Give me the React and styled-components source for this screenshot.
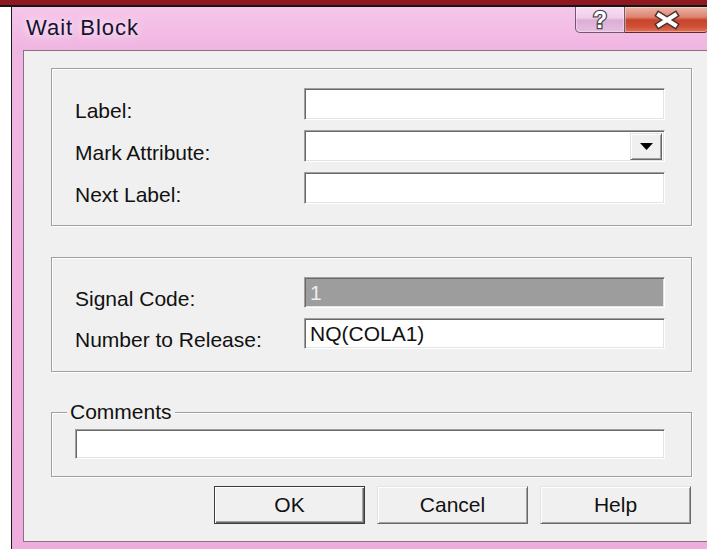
import React from "react";
import styled, { createGlobalStyle } from "styled-components";

const GlobalStyle = createGlobalStyle`
  *, *::before, *::after { box-sizing: border-box; }
  html, body {
    margin: 0;
    padding: 0;
    background: #fff;
  }
  body {
    width: 707px;
    height: 549px;
    overflow: hidden;
    font-family: "Liberation Sans", Arial, sans-serif;
  }
`;

const Screen = styled.div`
  width: 707px;
  height: 549px;
  overflow: hidden;
  display: flex;
  flex-direction: column;
`;

const TaskStrip = styled.div`
  flex: none;
  height: 7px;
  background: #8f1820;
  border-bottom: 2px solid #151515;
`;

const Desk = styled.div`
  flex: 1;
  display: flex;
  padding-left: 11px;
  min-height: 0;
`;

const Window = styled.div`
  flex: none;
  width: 721px;
  border-left: 1px solid #1b1b1b;
  border-right: 1px solid #1b1b1b;
  background: linear-gradient(180deg, #f5c6ea 0px, #f0b6e2 40px, #eeaddd 100%);
  padding: 0 11px 10px;
  display: flex;
  flex-direction: column;
`;

const TitleBar = styled.div`
  flex: none;
  height: 43px;
  display: flex;
  align-items: flex-start;
  justify-content: space-between;
`;

const Title = styled.div`
  padding: 10px 0 0 3px;
  font-size: 22px;
  line-height: 22px;
  letter-spacing: 1px;
  color: #15142e;
  text-shadow: 0 0 6px #fde9f8, 0 0 12px #fbe0f5;
`;

const Controls = styled.div`
  display: flex;
  margin-right: 11px;
`;

const CaptionButton = styled.div`
  height: 26px;
  width: ${p => p.$w}px;
  display: flex;
  align-items: center;
  justify-content: center;
  border: 1px solid ${p => (p.$close ? "#5e2a26" : "#6e5a6a")};
  border-top: none;
  border-left: ${p => (p.$close ? "none" : undefined)};
  border-radius: ${p => (p.$close ? "0 0 5px 0" : "0 0 0 5px")};
  background: ${p =>
    p.$close
      ? "linear-gradient(180deg, #ebb4a8 0%, #de8470 40%, #c8442c 52%, #cf4f37 78%, #e07458 100%)"
      : "linear-gradient(180deg, #f9e0f4 0%, #f0cbe9 45%, #dcaed4 52%, #e6bfe0 100%)"};
  box-shadow: inset 0 0 0 1px rgba(255, 255, 255, 0.35);

  svg {
    overflow: visible;
  }
`;

const Client = styled.div`
  flex: none;
  background: #f0f0f0;
  border: 1px solid #8a7086;
  padding: 17px 27px 17px;
  display: flex;
  flex-direction: column;
`;

const Group = styled.div`
  flex: none;
  position: relative;
  margin-top: ${p => p.$top || 0}px;
  border: 1px solid #a0a0a0;
  box-shadow: inset 1px 1px 0 #fff, 1px 1px 0 #fff;
  padding: ${p => p.$pad};
  display: grid;
  grid-template-columns: ${p => p.$cols || "229px 361px"};
  row-gap: 10px;
`;

const Caption = styled.span`
  position: absolute;
  top: -12px;
  left: 15px;
  padding: 0 3px;
  background: #f0f0f0;
  font-size: 21px;
  line-height: 22px;
  color: #111;
`;

const Label = styled.div`
  align-self: end;
  font-size: 21px;
  line-height: 19px;
  color: #111;
  white-space: nowrap;
`;

const TextBox = styled.input`
  display: block;
  width: 100%;
  height: ${p => p.$h}px;
  margin: 0;
  padding: 0 0 0 5px;
  font: 21px "Liberation Sans", Arial, sans-serif;
  color: ${p => (p.disabled ? "#ececec" : "#111")};
  background: ${p => (p.disabled ? "#9d9d9d" : "#fff")};
  border: 1px solid;
  border-color: #a0a0a0 #fff #fff #a0a0a0;
  box-shadow: inset 1px 1px 0 #696969, inset -1px -1px 0 #e3e3e3;
  outline: none;
`;

const Combo = styled.div`
  height: 32px;
  display: flex;
  justify-content: flex-end;
  align-items: center;
  padding-right: 2px;
  background: #fff;
  border: 1px solid;
  border-color: #a0a0a0 #fff #fff #a0a0a0;
  box-shadow: inset 1px 1px 0 #696969, inset -1px -1px 0 #e3e3e3;
`;

const DropButton = styled.div`
  width: 32px;
  height: 27px;
  margin-top: 1px;
  display: flex;
  align-items: center;
  justify-content: center;
  background: #f0f0f0;
  border: 1px solid;
  border-color: #e3e3e3 #696969 #696969 #e3e3e3;
  box-shadow: inset 1px 1px 0 #fff, inset -1px -1px 0 #a0a0a0;
`;

const ButtonRow = styled.div`
  flex: none;
  margin-top: 9px;
  padding-right: 1px;
  display: flex;
  justify-content: flex-end;
  gap: 12px;
`;

const Button = styled.button`
  flex: none;
  width: 151px;
  height: 38px;
  margin: 0;
  padding: 0;
  font: 21px "Liberation Sans", Arial, sans-serif;
  color: #111;
  background: #f0f0f0;
  border: 1px solid;
  border-color: ${p =>
    p.$default ? "#3c3c3c" : "#e3e3e3 #696969 #696969 #e3e3e3"};
  box-shadow: ${p =>
    p.$default
      ? "inset 1px 1px 0 #fff, inset -1px -1px 0 #696969, inset -2px -2px 0 #a0a0a0"
      : "inset 1px 1px 0 #fff, inset -1px -1px 0 #a0a0a0"};
`;

const HelpGlyph = () => (
  <svg width="22" height="24" viewBox="0 0 22 24">
    <text
      x="11"
      y="20"
      textAnchor="middle"
      fontFamily="Liberation Sans, Arial, sans-serif"
      fontWeight="bold"
      fontSize="23"
      fill="#fff"
      stroke="#4c4650"
      strokeWidth="2.6"
      paintOrder="stroke"
    >
      ?
    </text>
  </svg>
);

const CloseGlyph = () => (
  <svg width="28" height="18" viewBox="0 0 28 18">
    <path d="M6 4 L22 14 M22 4 L6 14" stroke="#4a3230" strokeWidth="7" strokeLinecap="square" />
    <path d="M6 4 L22 14 M22 4 L6 14" stroke="#fff" strokeWidth="4" strokeLinecap="square" />
  </svg>
);

const ArrowDown = () => (
  <svg width="13" height="7" viewBox="0 0 13 7">
    <polygon points="0,0 13,0 6.5,7" fill="#000" />
  </svg>
);

const App = () => {
  return (
    <>
      <GlobalStyle />
      <Screen>
        <TaskStrip />
        <Desk>
          <Window>
            <TitleBar>
              <Title>Wait Block</Title>
              <Controls>
                <CaptionButton $w={50}>
                  <HelpGlyph />
                </CaptionButton>
                <CaptionButton $w={84} $close>
                  <CloseGlyph />
                </CaptionButton>
              </Controls>
            </TitleBar>
            <Client>
              <Group $pad="19px 26px 21px 23px">
                <Label>Label:</Label>
                <TextBox $h={32} readOnly value="" />
                <Label>Mark Attribute:</Label>
                <Combo>
                  <DropButton>
                    <ArrowDown />
                  </DropButton>
                </Combo>
                <Label>Next Label:</Label>
                <TextBox $h={32} readOnly value="" />
              </Group>

              <Group $top={31} $pad="19px 26px 22px 23px">
                <Label>Signal Code:</Label>
                <TextBox $h={31} disabled value="1" />
                <Label>Number to Release:</Label>
                <TextBox $h={31} readOnly value="NQ(COLA1)" />
              </Group>

              <Group $top={40} $pad="16px 26px 17px 23px" $cols="590px">
                <Caption>Comments</Caption>
                <TextBox $h={30} readOnly value="" />
              </Group>

              <ButtonRow>
                <Button $default>OK</Button>
                <Button>Cancel</Button>
                <Button>Help</Button>
              </ButtonRow>
            </Client>
          </Window>
        </Desk>
      </Screen>
    </>
  );
};

export default App;
